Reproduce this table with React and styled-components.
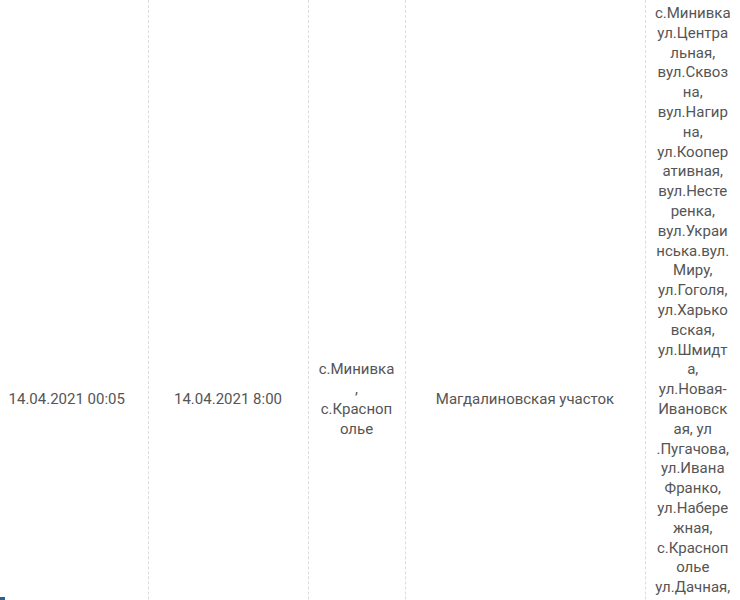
import React from "react";
import styled, { createGlobalStyle } from "styled-components";

const Global = createGlobalStyle`
  html, body { margin: 0; padding: 0; background: #fff; }
  body { font-family: Roboto, "Noto Sans", Arial, sans-serif; overflow: hidden; }
`;

const Wrap = styled.div`
  width: 740px;
  height: 600px;
  overflow: hidden;
`;

const Table = styled.table`
  border-collapse: collapse;
  table-layout: fixed;
  width: 740px;
`;

const Row = styled.tr`
  height: 800px;
`;

const Cell = styled.td`
  width: ${(p) => p.$w}px;
  padding: ${(p) => p.$pad || "0 10px"};
  vertical-align: ${(p) => (p.$top ? "top" : "middle")};
  text-align: center;
  font-size: 15px;
  line-height: 19.8px;
  color: #555;
  overflow-wrap: anywhere;
  border-left: 1px dashed #dcdcdc;
  box-sizing: border-box;
  &:first-child { border-left: none; }
`;

const Corner = styled.div`
  position: fixed;
  left: 0;
  bottom: 0;
  width: 5px;
  height: 3px;
  background: #2f5f8f;
`;

export default function App() {
  return (
    <Wrap>
      <Global />
      <Table>
        <tbody>
          <Row>
            <Cell $w={148} $pad="0 20px 0 6px">14.04.2021 00:05</Cell>
            <Cell $w={160}>14.04.2021 8:00</Cell>
            <Cell $w={97}>с.Минивка , с.Краснопольe</Cell>
            <Cell $w={240}>Магдалиновская участок</Cell>
            <Cell $w={95} $top $pad="4px 9px 0">
              с.Минивка ул.Центральная, вул.Сквозна, вул.Нагирна,
              ул.Кооперативная, вул.Нестеренка, вул.Украинська.вул.Миру,
              ул.Гоголя, ул.Харьковская, ул.Шмидта, ул.Новая-Ивановская, ул
              .Пугачова, ул.Ивана Франко, ул.Набережная, с.Краснопольe
              ул.Дачная,
            </Cell>
          </Row>
        </tbody>
      </Table>
      <Corner />
    </Wrap>
  );
}
